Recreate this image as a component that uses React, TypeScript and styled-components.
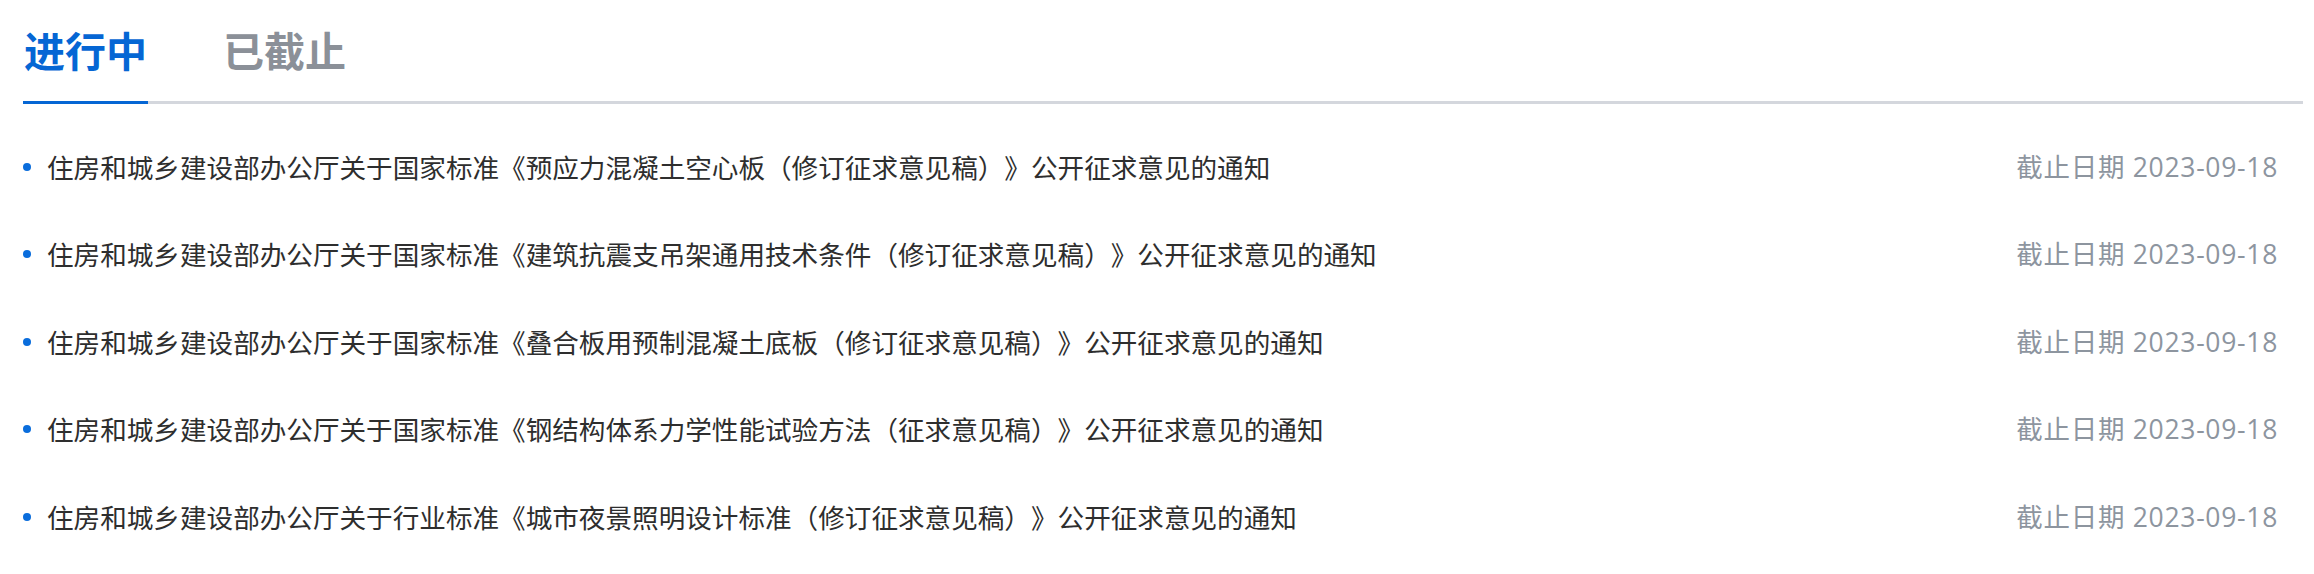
import React, { useState } from "react";
import styled, { createGlobalStyle } from "styled-components";

const GlobalStyle = createGlobalStyle`
  html, body {
    margin: 0;
    padding: 0;
    background: #ffffff;
  }
  body {
    font-family: "Open Sans", "Noto Sans CJK SC", sans-serif;
    -webkit-font-smoothing: antialiased;
    text-spacing-trim: space-all;
  }
`;

const Panel = styled.section`
  padding: 0 11px 0 23px;
`;

const TabBar = styled.div`
  display: flex;
  gap: 74px;
  border-bottom: 3px solid #d4d7dd;
`;

const Tab = styled.button<{ $active?: boolean }>`
  appearance: none;
  background: none;
  border: 0;
  border-bottom: 3px solid ${(p) => (p.$active ? "#0566d4" : "transparent")};
  margin: 0 0 -3px;
  padding: 20px 1px 23px;
  font-family: "Noto Sans CJK SC", sans-serif;
  font-size: 41px;
  line-height: 58px;
  font-weight: 700;
  color: ${(p) => (p.$active ? "#0566d4" : "#8b9098")};
  cursor: pointer;
`;

const List = styled.ul`
  list-style: none;
  margin: 19px 0 0;
  padding: 0 25px 0 0;
`;

const Row = styled.li`
  display: flex;
  align-items: center;
  height: 87.5px;
`;

const Bullet = styled.span`
  flex: none;
  width: 8px;
  height: 8px;
  border-radius: 50%;
  background: #0a6ddc;
  margin-right: 16px;
`;

const Title = styled.a`
  flex: 1;
  min-width: 0;
  font-family: "Noto Sans CJK SC", sans-serif;
  font-size: 26.6px;
  line-height: 40px;
  color: #2e2e2e;
  text-decoration: none;
  white-space: nowrap;
  text-spacing-trim: space-all;
`;

const Deadline = styled.span`
  flex: none;
  font-size: 26.5px;
  line-height: 40px;
  letter-spacing: 0.7px;
  color: #8d959f;
`;

const notices = [
  "住房和城乡建设部办公厅关于国家标准《预应力混凝土空心板（修订征求意见稿）》公开征求意见的通知",
  "住房和城乡建设部办公厅关于国家标准《建筑抗震支吊架通用技术条件（修订征求意见稿）》公开征求意见的通知",
  "住房和城乡建设部办公厅关于国家标准《叠合板用预制混凝土底板（修订征求意见稿）》公开征求意见的通知",
  "住房和城乡建设部办公厅关于国家标准《钢结构体系力学性能试验方法（征求意见稿）》公开征求意见的通知",
  "住房和城乡建设部办公厅关于行业标准《城市夜景照明设计标准（修订征求意见稿）》公开征求意见的通知",
];

export default function App() {
  const [tab, setTab] = useState(0);
  return (
    <>
      <GlobalStyle />
      <Panel>
        <TabBar>
          <Tab $active={tab === 0} onClick={() => setTab(0)}>
            进行中
          </Tab>
          <Tab $active={tab === 1} onClick={() => setTab(1)}>
            已截止
          </Tab>
        </TabBar>
        <List>
          {notices.map((n) => (
            <Row key={n}>
              <Bullet />
              <Title href="#">{n}</Title>
              <Deadline>截止日期 2023-09-18</Deadline>
            </Row>
          ))}
        </List>
      </Panel>
    </>
  );
}
